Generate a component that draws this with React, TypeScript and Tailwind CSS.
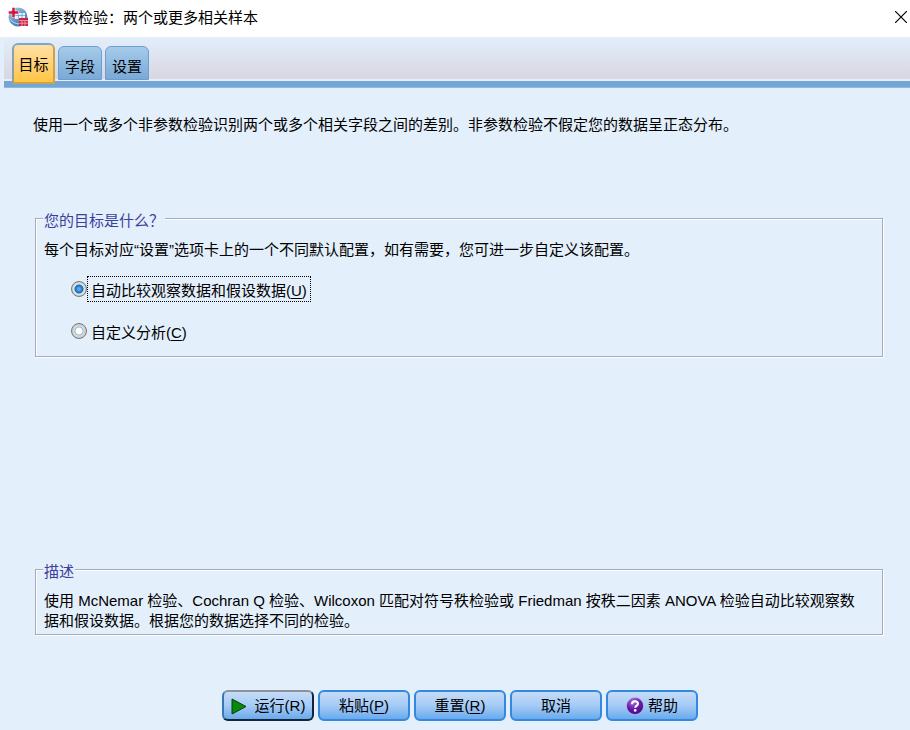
import { useState, type ReactNode } from "react";

const tabs = ["目标", "字段", "设置"];

function AppIcon() {
  return (
    <svg width="20" height="20" viewBox="0 0 20 20" aria-hidden="true">
      <defs>
        <linearGradient id="globe" x1="0" y1="0" x2="0.6" y2="1">
          <stop offset="0" stopColor="#a9c9e4" />
          <stop offset="0.5" stopColor="#6fa3cd" />
          <stop offset="1" stopColor="#3b78b0" />
        </linearGradient>
      </defs>
      <circle cx="10" cy="10" r="9.500" fill="url(#globe)" />
      <path d="M7 6h10v6H7z" fill="#e6f1fa" />
      <path d="M7 8.500h10M10.500 6v6M14 6v6" stroke="#6d9fca" strokeWidth="0.8" />
      <path d="M2 12c2 3 5 4.500 9 5" stroke="#c4dcf0" strokeWidth="1" fill="none" />
      <path d="M4 0.500h3v3.500h3.500v3H7v3.500H4V7H0.500V4H4z" fill="#d3143c" stroke="#fff" strokeWidth="0.5" />
      <path d="M11 11h9v8h-9z" fill="#cf1f45" />
      <path d="M11 13.500h9M11 16.200h9M14 13.500V19M17 13.500V19" stroke="#f0a9b8" strokeWidth="0.8" />
    </svg>
  );
}

function HelpIcon() {
  return (
    <svg width="18" height="18" viewBox="0 0 18 18" aria-hidden="true">
      <defs>
        <radialGradient id="help" cx="0.4" cy="0.25" r="0.8">
          <stop offset="0" stopColor="#a878d8" />
          <stop offset="0.5" stopColor="#6a1fae" />
          <stop offset="1" stopColor="#43007e" />
        </radialGradient>
      </defs>
      <circle cx="9" cy="9" r="8.500" fill="url(#help)" stroke="#d8c8ee" strokeWidth="0.6" />
      <path d="M6 7.200C6 3.400 12 3.400 12 6.800C12 8.700 9.300 8.600 9.200 10.800" fill="none" stroke="#fff" strokeWidth="2" />
      <circle cx="9.200" cy="13.400" r="1.300" fill="#fff" />
    </svg>
  );
}

function RunIcon() {
  return (
    <svg className="mr-1" width="16" height="17" viewBox="0 0 16 17" aria-hidden="true">
      <path d="M1 1L15 8.500L1 16z" fill="#078a07" stroke="#0a3d0a" strokeWidth="1" />
    </svg>
  );
}

function Group({ title, children }: { title: string; children: ReactNode }) {
  return (
    <fieldset className="min-w-0 border border-[#a5abb8] px-2 shadow-[1px_1px_0_#fff,inset_1px_1px_0_#fff]">
      <legend className="-ml-px h-6 bg-[#e3effb] px-px pt-[5px] leading-5 text-[#3c3f9c]">{title}</legend>
      {children}
    </fieldset>
  );
}

type OptionProps = { label: string; mnemonic: string; checked: boolean; focused: boolean; onSelect: () => void };

function Option({ label, mnemonic, checked, focused, onSelect }: OptionProps) {
  return (
    <label className="flex w-fit items-center">
      <input
        type="radio"
        name="objective"
        checked={checked}
        onChange={onSelect}
        className="size-4 appearance-none rounded-full border border-[#737b80] bg-[radial-gradient(circle,#fff_0_3px,#9bb5cb_4px,#d9e0dc_5px,#c2c9c8_7px)] outline-none checked:bg-[radial-gradient(circle,#5ba9ee_0_1px,#1567bd_4px,#e4ece8_5px,#c2c9c8_7px)]"
      />
      <span className={`border border-dotted px-[3px] pt-1 leading-5 ${focused ? "border-black" : "border-transparent"}`}>
        {label}(<u className="underline-offset-2">{mnemonic}</u>)
      </span>
    </label>
  );
}

function ActionButton({ primary = false, children }: { primary?: boolean; children: ReactNode }) {
  return (
    <button
      type="button"
      className={`flex h-[31px] w-[92px] items-center justify-center gap-1 rounded-md border-2 bg-linear-to-b from-[#c5dcf8] via-[#a5cbf6] to-[#69aaec] pt-px ${
        primary ? "border-[#10263d] border-t-[#8c939c] border-l-[#3578b5]" : "border-[#3289df]"
      }`}
    >
      {children}
    </button>
  );
}

export default function App() {
  const [tab, setTab] = useState(0);
  const [objective, setObjective] = useState(0);

  return (
    <div className="flex min-h-screen flex-col bg-[#e3effb] font-['Liberation_Sans','Noto_Sans_CJK_SC',sans-serif] text-[15px] leading-5 text-black">
      <header className="flex h-[37px] items-center bg-white pb-1 pl-2">
        <AppIcon />
        <h1 className="ml-[5px] flex-1 pt-0.5">非参数检验：两个或更多相关样本</h1>
        <button type="button" aria-label="关闭" className="p-[3px]">
          <svg width="12" height="12" viewBox="0 0 12 12" aria-hidden="true">
            <path d="M0 0L12 12M12 0L0 12" stroke="#000" strokeWidth="1.200" />
          </svg>
        </button>
      </header>

      <nav className="ml-1 flex h-[51px] items-start gap-[3px] border-b border-[#8fb8df] bg-[linear-gradient(#e3effb_0,#d8d6e2_42px,#e8eef6_42px,#e8eef6_44px,#74a6d5_44px)] pl-2" role="tablist">
        {tabs.map((name, i) => (
          <button
            key={name}
            type="button"
            role="tab"
            aria-selected={tab === i}
            onClick={() => setTab(i)}
            className={
              tab === i
                ? "mt-1.5 h-[41px] w-[43px] rounded-t-md border-2 border-[#c9a548] border-t-[#7aa7d2] border-l-[#8e9fae] bg-linear-to-b from-[#ffe0a3] to-[#ffc43f] pt-0.5"
                : "mt-[9px] h-[34px] w-11 rounded-t-md border border-[#6b9fd0] bg-linear-to-b from-[#a6cbea] to-[#79a9d6] pt-2"
            }
          >
            {name}
          </button>
        ))}
      </nav>

      <main className="flex flex-1 flex-col pt-[27px] pr-[27px] pb-[9px] pl-[35px]">
        <p className="-ml-0.5 mb-[71px]">使用一个或多个非参数检验识别两个或多个相关字段之间的差别。非参数检验不假定您的数据呈正态分布。</p>

        <Group title="您的目标是什么？">
          <p className="mt-2.5">每个目标对应“设置”选项卡上的一个不同默认配置，如有需要，您可进一步自定义该配置。</p>
          <div className="mt-4 mb-3 ml-[27px] flex flex-col gap-4">
            <Option label="自动比较观察数据和假设数据" mnemonic="U" checked={objective === 0} focused={objective === 0} onSelect={() => setObjective(0)} />
            <Option label="自定义分析" mnemonic="C" checked={objective === 1} focused={objective === 1} onSelect={() => setObjective(1)} />
          </div>
        </Group>

        <div className="min-h-4 flex-1" />

        <Group title="描述">
          <p className="mt-2.5 mb-[3px] pr-3">
            使用 McNemar 检验、Cochran Q 检验、Wilcoxon 匹配对符号秩检验或 Friedman 按秩二因素 ANOVA 检验自动比较观察数据和假设数据。根据您的数据选择不同的检验。
          </p>
        </Group>

        <footer className="mt-[55px] flex justify-center gap-1 pl-0.5">
          <ActionButton primary>
            <RunIcon />
            <span>运行(R)</span>
          </ActionButton>
          <ActionButton>
            <span>粘贴(<u className="underline-offset-2">P</u>)</span>
          </ActionButton>
          <ActionButton>
            <span>重置(<u className="underline-offset-2">R</u>)</span>
          </ActionButton>
          <ActionButton>取消</ActionButton>
          <ActionButton>
            <HelpIcon />
            <span>帮助</span>
          </ActionButton>
        </footer>
      </main>
    </div>
  );
}
